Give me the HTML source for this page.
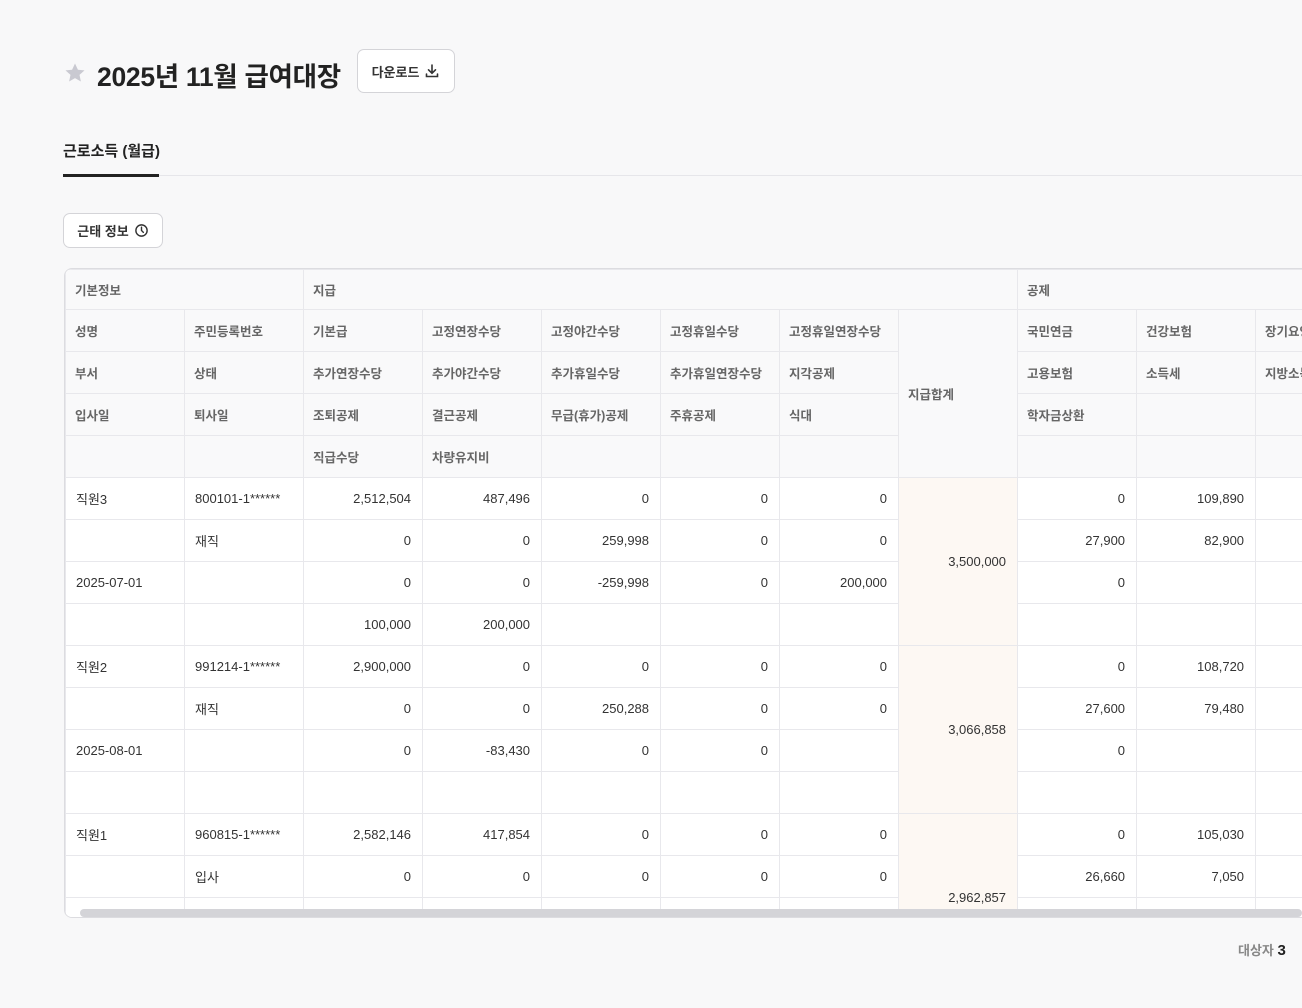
<!DOCTYPE html>
<html><head><meta charset="utf-8"><style>
*{margin:0;padding:0;box-sizing:border-box}
body{width:1302px;height:1008px;background:#f8f8f9;font-family:"Liberation Sans","Noto Sans CJK KR",sans-serif;position:relative;overflow:hidden;color:#333}
.abs{position:absolute}
.title{left:97px;top:55px;font-size:26.5px;font-weight:700;color:#222;letter-spacing:-0.3px}
.btn{border:1px solid #d4d4d8;border-radius:7px;background:#fff;font-size:13px;font-weight:700;color:#333;display:flex;align-items:center;justify-content:center;gap:5px}
.tab{left:63px;top:140px;font-size:15px;font-weight:700;color:#222}
.wrap{left:64px;top:268px;width:1250px;height:650px;border:1px solid #dcdce0;border-radius:8px;overflow:hidden;background:#fff}
table{border-collapse:collapse;table-layout:fixed;font-size:13px;width:1309px}
td{border:1px solid #e8e8ec;height:42px;padding:0 9px;white-space:nowrap;overflow:hidden}
thead td{background:#f9f9fa;color:#666;font-weight:700;font-size:12.5px}
thead tr:first-child td{height:40px}
tbody td{background:#fff;color:#333;text-align:right;padding-right:11px}
tbody td.l{text-align:left;padding-left:10px}
td.tot{background:#fdf8f3}
.sb{left:80px;top:909px;width:1222px;height:8px;background:#d4d4d8;border-radius:4px}
</style></head><body>
<svg class="abs" style="left:63px;top:61px" width="24" height="24" viewBox="0 0 24 24"><path d="M12 2.5l2.9 6.2 6.6.7-5 4.5 1.4 6.6L12 17.1l-5.9 3.4 1.4-6.6-5-4.5 6.6-.7z" fill="#c9c9d1"/></svg>
<div class="abs title">2025년 11월 급여대장</div>
<div class="abs btn" style="left:357px;top:49px;width:98px;height:44px">다운로드
<svg width="16" height="16" viewBox="0 0 16 16" fill="none" stroke="#333" stroke-width="1.6" stroke-linecap="round"><path d="M8 2v8M4.5 6.8L8 10.3l3.5-3.5M2.5 11v2.5h11V11"/></svg></div>
<div class="abs tab">근로소득 (월급)</div>
<div class="abs" style="left:63px;top:174px;width:96px;height:3px;background:#222"></div>
<div class="abs" style="left:159px;top:175px;width:1143px;height:1px;background:#e6e6ea"></div>
<div class="abs btn" style="left:63px;top:213px;width:100px;height:35px">근태 정보
<svg width="15" height="15" viewBox="0 0 16 16" fill="none" stroke="#333" stroke-width="1.5"><circle cx="8" cy="8" r="6"/><path d="M8 4.5V8l2 2" stroke-linecap="round"/></svg></div>
<div class="abs wrap">
<table>
<colgroup><col style="width:119px"><col style="width:119px"><col style="width:119px"><col style="width:119px"><col style="width:119px"><col style="width:119px"><col style="width:119px"><col style="width:119px"><col style="width:119px"><col style="width:119px"><col style="width:119px"></colgroup>
<thead>
<tr><td colspan="2">기본정보</td><td colspan="6">지급</td><td colspan="3">공제</td></tr>
<tr><td>성명</td><td>주민등록번호</td><td>기본급</td><td>고정연장수당</td><td>고정야간수당</td><td>고정휴일수당</td><td>고정휴일연장수당</td><td rowspan="4">지급합계</td><td>국민연금</td><td>건강보험</td><td>장기요양</td></tr>
<tr><td>부서</td><td>상태</td><td>추가연장수당</td><td>추가야간수당</td><td>추가휴일수당</td><td>추가휴일연장수당</td><td>지각공제</td><td>고용보험</td><td>소득세</td><td>지방소득</td></tr>
<tr><td>입사일</td><td>퇴사일</td><td>조퇴공제</td><td>결근공제</td><td>무급(휴가)공제</td><td>주휴공제</td><td>식대</td><td>학자금상환</td><td></td><td></td></tr>
<tr><td></td><td></td><td>직급수당</td><td>차량유지비</td><td></td><td></td><td></td><td></td><td></td><td></td></tr>
</thead>
<tbody>
<tr><td class="l">직원3</td><td class="l">800101-1******</td><td>2,512,504</td><td>487,496</td><td>0</td><td>0</td><td>0</td><td rowspan="4" class="tot">3,500,000</td><td>0</td><td>109,890</td><td></td></tr>
<tr><td></td><td class="l">재직</td><td>0</td><td>0</td><td>259,998</td><td>0</td><td>0</td><td>27,900</td><td>82,900</td><td></td></tr>
<tr><td class="l">2025-07-01</td><td></td><td>0</td><td>0</td><td>-259,998</td><td>0</td><td>200,000</td><td>0</td><td></td><td></td></tr>
<tr><td></td><td></td><td>100,000</td><td>200,000</td><td></td><td></td><td></td><td></td><td></td><td></td></tr>
<tr><td class="l">직원2</td><td class="l">991214-1******</td><td>2,900,000</td><td>0</td><td>0</td><td>0</td><td>0</td><td rowspan="4" class="tot">3,066,858</td><td>0</td><td>108,720</td><td></td></tr>
<tr><td></td><td class="l">재직</td><td>0</td><td>0</td><td>250,288</td><td>0</td><td>0</td><td>27,600</td><td>79,480</td><td></td></tr>
<tr><td class="l">2025-08-01</td><td></td><td>0</td><td>-83,430</td><td>0</td><td>0</td><td></td><td>0</td><td></td><td></td></tr>
<tr><td></td><td></td><td></td><td></td><td></td><td></td><td></td><td></td><td></td><td></td></tr>
<tr><td class="l">직원1</td><td class="l">960815-1******</td><td>2,582,146</td><td>417,854</td><td>0</td><td>0</td><td>0</td><td rowspan="4" class="tot">2,962,857</td><td>0</td><td>105,030</td><td></td></tr>
<tr><td></td><td class="l">입사</td><td>0</td><td>0</td><td>0</td><td>0</td><td>0</td><td>26,660</td><td>7,050</td><td></td></tr>
<tr><td></td><td></td><td></td><td></td><td></td><td></td><td></td><td></td><td></td><td></td></tr>
<tr><td></td><td></td><td></td><td></td><td></td><td></td><td></td><td></td><td></td><td></td></tr>
</tbody></table>
</div>
<div class="abs sb"></div>
<div class="abs" style="left:1238px;top:940px;font-size:13px;color:#888;font-weight:700">대상자 <span style="color:#222;font-size:15px">3</span></div>
</body></html>
